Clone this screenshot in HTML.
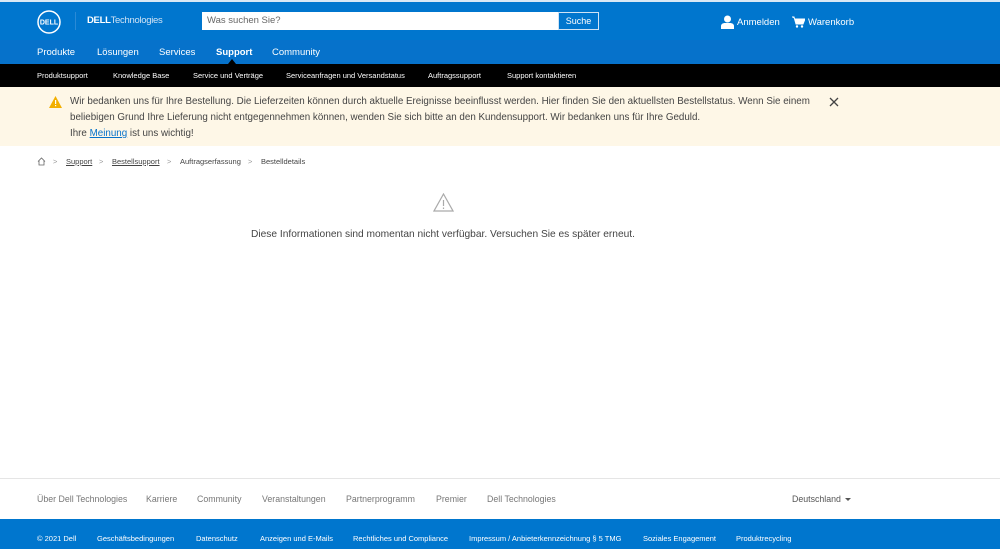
<!DOCTYPE html>
<html><head><meta charset="utf-8">
<style>
*{margin:0;padding:0;box-sizing:border-box}
body{width:1000px;height:549px;overflow:hidden;font-family:"Liberation Sans",sans-serif;background:#fff;position:relative}
.abs{position:absolute}
#top{left:0;top:0;width:1000px;height:40px;background:#0076ce;border-top:2px solid #d9e8f5}
#nav{left:0;top:40px;width:1000px;height:24px;background:#0672cb}
#nav span{position:absolute;top:7px;color:#fff;font-size:9.5px}
#sub{left:0;top:64px;width:1000px;height:23px;background:#000}
#sub span{position:absolute;top:7px;color:#fff;font-size:7.5px}
#ban{left:0;top:87px;width:1000px;height:59px;background:#fef7e7}
#ban p{position:absolute;left:70px;top:7px;width:748px;font-size:9.8px;line-height:16px;color:#444}
.bc{position:absolute;top:157px;font-size:7.5px;color:#444}
#foot{left:0;top:478px;width:1000px;height:41px;border-top:1px solid #e5e5e5}
#foot span{position:absolute;top:15px;font-size:8.8px;color:#777}
#bot{left:0;top:519px;width:1000px;height:30px;background:#0076ce}
#bot span{position:absolute;top:15px;color:#fff;font-size:7.5px}
</style></head><body>
<div id="top" class="abs">
 <svg class="abs" style="left:37px;top:8px" width="24" height="24" viewBox="0 0 24 24"><circle cx="12" cy="12" r="11" fill="none" stroke="#fff" stroke-width="1.5"/><text x="12" y="14.5" font-size="7" font-weight="bold" fill="#fff" text-anchor="middle" font-family="Liberation Sans">DELL</text></svg>
 <div class="abs" style="left:75px;top:10px;width:1px;height:18px;background:#2a8ad6"></div>
 <div class="abs" style="left:87px;top:13px;color:#fff;font-size:9.5px;letter-spacing:-0.3px"><b>DELL</b><span style="color:#cfe3f5">Technologies</span></div>
 <div class="abs" style="left:202px;top:10px;width:356px;height:18px;background:#fff;font-size:9.5px;color:#666;padding:3px 5px">Was suchen Sie?</div>
 <div class="abs" style="left:558px;top:10px;width:41px;height:18px;border:1px solid #cfe3f5;color:#fff;font-size:9px;text-align:center;padding-top:3px">Suche</div>
 <svg class="abs" style="left:721px;top:13px" width="13" height="14" viewBox="0 0 13 14"><circle cx="6.5" cy="4" r="3.5" fill="#fff"/><path d="M0 14v-3c0-2 2-3 4-3h5c2 0 4 1 4 3v3z" fill="#fff"/></svg>
 <span class="abs" style="left:737px;top:15px;color:#fff;font-size:9.5px">Anmelden</span>
 <svg class="abs" style="left:792px;top:14px" width="13" height="12" viewBox="0 0 13 12"><path d="M0 1h2l2 7h7l2-5H3" fill="#fff" stroke="#fff" stroke-width="1"/><circle cx="5" cy="10.5" r="1.2" fill="#fff"/><circle cx="10" cy="10.5" r="1.2" fill="#fff"/></svg>
 <span class="abs" style="left:808px;top:15px;color:#fff;font-size:9.5px">Warenkorb</span>
</div>
<div id="nav" class="abs">
 <span style="left:37px">Produkte</span><span style="left:97px">Lösungen</span><span style="left:159px">Services</span><span style="left:216px;font-weight:bold">Support</span><span style="left:272px">Community</span>
 <div class="abs" style="left:228px;top:19px;width:0;height:0;border-left:4px solid transparent;border-right:4px solid transparent;border-bottom:5px solid #000"></div>
</div>
<div id="sub" class="abs">
 <span style="left:37px">Produktsupport</span><span style="left:113px">Knowledge Base</span><span style="left:193px">Service und Verträge</span><span style="left:286px">Serviceanfragen und Versandstatus</span><span style="left:428px">Auftragssupport</span><span style="left:507px">Support kontaktieren</span>
</div>
<div id="ban" class="abs">
 <svg class="abs" style="left:49px;top:9px" width="13" height="12" viewBox="0 0 13 12"><path d="M6.5 0L13 12H0z" fill="#f2af00"/><rect x="6" y="4" width="1.2" height="4" fill="#fff"/><rect x="6" y="9" width="1.2" height="1.2" fill="#fff"/></svg>
 <p>Wir bedanken uns für Ihre Bestellung. Die Lieferzeiten können durch aktuelle Ereignisse beeinflusst werden. Hier finden Sie den aktuellsten Bestellstatus. Wenn Sie einem beliebigen Grund Ihre Lieferung nicht entgegennehmen können, wenden Sie sich bitte an den Kundensupport. Wir bedanken uns für Ihre Geduld.<br>Ihre <u style="color:#0672cb">Meinung</u> ist uns wichtig!</p>
 <svg class="abs" style="left:829px;top:10px" width="10" height="10" viewBox="0 0 10 10"><path d="M1 1L9 9M9 1L1 9" stroke="#444" stroke-width="1.3"/></svg>
</div>
<svg class="abs" style="left:37px;top:157px" width="9" height="9" viewBox="0 0 9 9"><path d="M1 4.5L4.5 1L8 4.5M2 3.5V8h5V3.5" fill="none" stroke="#666" stroke-width="0.8"/></svg>
<div class="bc" style="left:53px;color:#999">&gt;</div>
<div class="bc" style="left:66px"><u>Support</u></div>
<div class="bc" style="left:99px;color:#999">&gt;</div>
<div class="bc" style="left:112px"><u>Bestellsupport</u></div>
<div class="bc" style="left:167px;color:#999">&gt;</div>
<div class="bc" style="left:180px">Auftragserfassung</div>
<div class="bc" style="left:248px;color:#999">&gt;</div>
<div class="bc" style="left:261px">Bestelldetails</div>
<svg class="abs" style="left:433px;top:193px" width="21" height="19" viewBox="0 0 21 19"><path d="M10.5 1L20 18H1z" fill="none" stroke="#aaa" stroke-width="1.2"/><path d="M10.5 7v6M10.5 14.5v1.5" stroke="#aaa" stroke-width="1.2"/></svg>
<div class="abs" style="left:0;width:886px;top:229px;text-align:center;font-size:10.2px;color:#444">Diese Informationen sind momentan nicht verfügbar. Versuchen Sie es später erneut.</div>
<div id="foot" class="abs">
 <span style="left:37px">Über Dell Technologies</span><span style="left:146px">Karriere</span><span style="left:197px">Community</span><span style="left:262px">Veranstaltungen</span><span style="left:346px">Partnerprogramm</span><span style="left:436px">Premier</span><span style="left:487px">Dell Technologies</span>
 <span style="left:792px;color:#555">Deutschland</span>
 <div class="abs" style="left:845px;top:19px;width:0;height:0;border-left:3px solid transparent;border-right:3px solid transparent;border-top:3px solid #555"></div>
</div>
<div id="bot" class="abs">
 <span style="left:37px">© 2021 Dell</span><span style="left:97px">Geschäftsbedingungen</span><span style="left:196px">Datenschutz</span><span style="left:260px">Anzeigen und E-Mails</span><span style="left:353px">Rechtliches und Compliance</span><span style="left:469px">Impressum / Anbieterkennzeichnung § 5 TMG</span><span style="left:643px">Soziales Engagement</span><span style="left:736px">Produktrecycling</span>
</div>
</body></html>
